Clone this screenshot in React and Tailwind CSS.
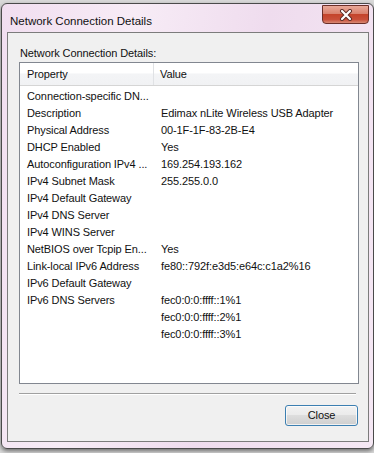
import React from "react";

const rows = [
  ["Connection-specific DN...", ""],
  ["Description", "Edimax nLite Wireless USB Adapter"],
  ["Physical Address", "00-1F-1F-83-2B-E4"],
  ["DHCP Enabled", "Yes"],
  ["Autoconfiguration IPv4 ...", "169.254.193.162"],
  ["IPv4 Subnet Mask", "255.255.0.0"],
  ["IPv4 Default Gateway", ""],
  ["IPv4 DNS Server", ""],
  ["IPv4 WINS Server", ""],
  ["NetBIOS over Tcpip En...", "Yes"],
  ["Link-local IPv6 Address", "fe80::792f:e3d5:e64c:c1a2%16"],
  ["IPv6 Default Gateway", ""],
  ["IPv6 DNS Servers", "fec0:0:0:ffff::1%1"],
  ["", "fec0:0:0:ffff::2%1"],
  ["", "fec0:0:0:ffff::3%1"],
];

const CloseX = () => (
  <svg width="14" height="12" viewBox="0 0 14 12">
    <path d="M3 2 L11 10 M11 2 L3 10" stroke="#5a2a24" strokeWidth="4" strokeLinecap="round" />
    <path d="M3 2 L11 10 M11 2 L3 10" stroke="#ffffff" strokeWidth="2.2" strokeLinecap="round" />
  </svg>
);

export default function App() {
  return (
    <div className="w-[374px] h-[453px] overflow-hidden bg-[#d9d9d9] font-['Liberation_Sans',Arial,sans-serif] text-[11px] tracking-[-0.1px] text-[#111]">
      <div className="ml-[1px] mt-[3px] w-[373px] h-[446px] rounded-[6px] border border-[#4a4a4a] bg-[linear-gradient(100deg,#f1def0_0%,#f7ecf6_30%,#efdcee_60%,#f5e8f4_100%)] shadow-[0_2px_4px_rgba(0,0,0,0.5)] flex flex-col">
        {/* title bar */}
        <div className="h-[28px] flex items-start pl-[8px] pr-[4px]">
          <div className="pt-[9px] flex-1 text-[11.5px] tracking-normal">Network Connection Details</div>
          <div className="mt-[1px] w-[47px] h-[19px] rounded-b-[4px] border border-[#6b2f28] bg-[linear-gradient(#e9a898_0%,#d9826e_45%,#c4442b_50%,#c9503a_80%,#d98a74_100%)] flex items-center justify-center">
            <CloseX />
          </div>
        </div>

        {/* client area */}
        <div className="ml-[5px] mr-[4px] h-[410px] border border-[#7c7c7c] bg-[#f0f0f0] flex flex-col pl-[11px]">
          <div className="pl-[1px] pt-[12px] h-[29px]">Network Connection Details:</div>
          <div className="w-[340px] h-[322px] border border-[#828790] bg-white flex flex-col">
            <div className="h-[23px] flex border-b border-[#d5d5d5] bg-[linear-gradient(#ffffff_0%,#ffffff_45%,#f3f4f6_50%,#f1f2f4_100%)]">
              <div className="w-[134px] border-r border-[#e0e2e5] pl-[7px] pt-[1px] flex items-center">Property</div>
              <div className="pl-[6px] pt-[1px] flex items-center">Value</div>
            </div>
            <div className="pt-[2px]">
              {rows.map(([p, v], i) => (
                <div key={i} className="h-[17px] flex items-center whitespace-nowrap">
                  <div className="w-[135px] pl-[7px]">{p}</div>
                  <div className="pl-[6px]">{v}</div>
                </div>
              ))}
            </div>
          </div>
          <div className="mt-[9px] w-[337px] border-t border-[#a0a0a0] border-b border-b-white" />
          <div className="flex justify-end w-[339px] mt-[10px]">
            <div className="w-[73px] h-[21px] rounded-[3px] border border-[#3c7fb1] bg-[linear-gradient(#f2f2f2_0%,#ebebeb_45%,#dddddd_50%,#cfcfcf_100%)] shadow-[inset_0_0_0_1px_rgba(255,255,255,0.7)] flex items-center justify-center">
              Close
            </div>
          </div>
        </div>
      </div>
    </div>
  );
}
